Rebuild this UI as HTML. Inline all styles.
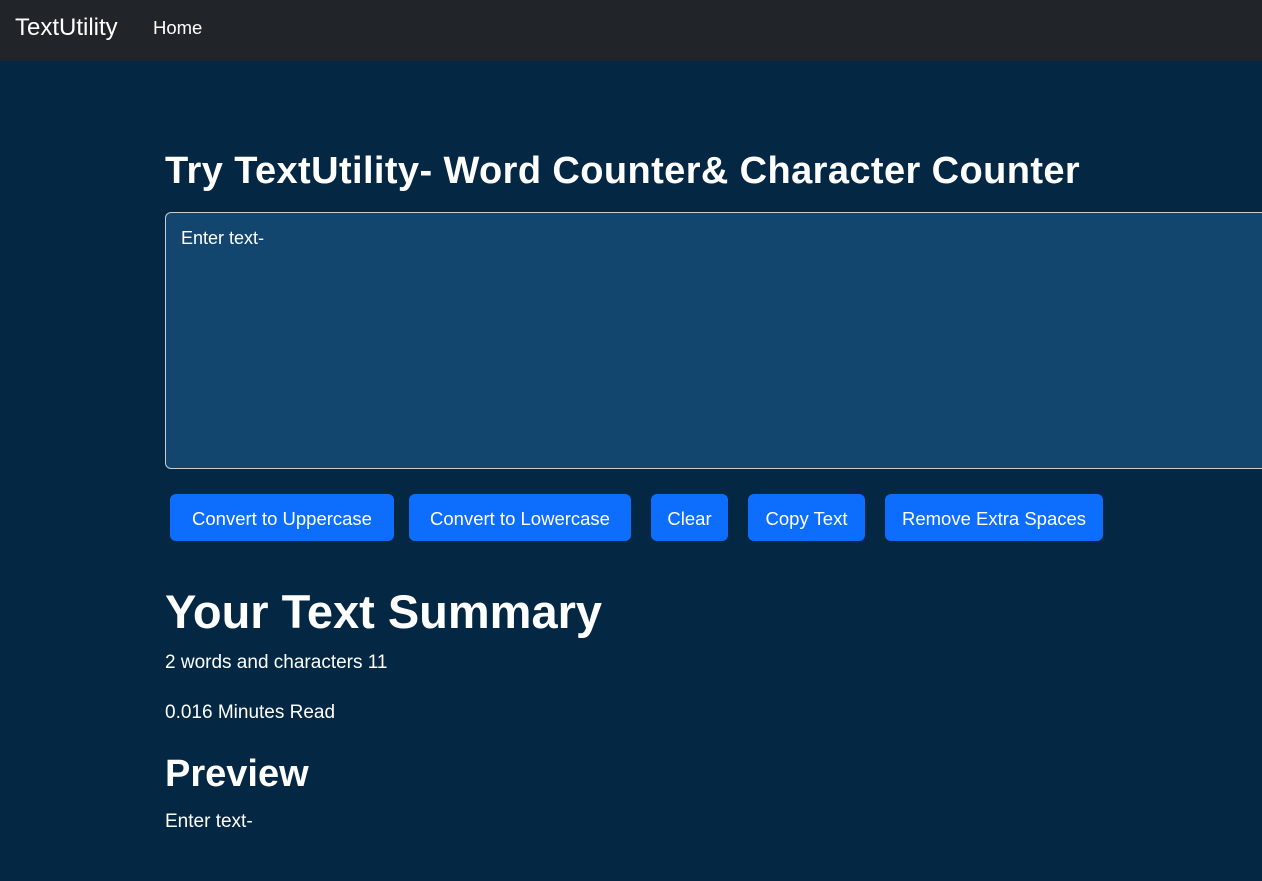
<!DOCTYPE html>
<html><head><style>
body{margin:0;width:1262px;height:881px;overflow:hidden;background:#042743;font-family:"Liberation Sans",sans-serif;color:#fff;position:relative}
.nav{position:absolute;left:0;top:0;width:1262px;height:61px;background:#212529}
.abs{position:absolute;white-space:nowrap}
.ta{position:absolute;left:165px;top:212px;width:1110px;height:257px;background:#13466e;border:1px solid #ccc;border-radius:6px;box-sizing:border-box}
.btn{position:absolute;top:494px;height:47px;background:#0d6efd;border-radius:6px;font-size:18.5px;line-height:49px;text-align:center}
</style></head><body>
<div class="nav"></div>
<div class="abs" style="left:15px;top:14px;font-size:24px">TextUtility</div>
<div class="abs" style="left:153px;top:17px;font-size:18.5px">Home</div>
<div class="abs" style="left:165px;top:150px;font-size:38px;font-weight:bold;letter-spacing:0.4px">Try TextUtility- Word Counter&amp; Character Counter</div>
<div class="ta"></div>
<div class="abs" style="left:181px;top:228px;font-size:18px">Enter text-</div>
<div class="btn" style="left:170px;width:224px">Convert to Uppercase</div>
<div class="btn" style="left:409px;width:222px">Convert to Lowercase</div>
<div class="btn" style="left:651px;width:77px">Clear</div>
<div class="btn" style="left:748px;width:117px">Copy Text</div>
<div class="btn" style="left:885px;width:218px">Remove Extra Spaces</div>
<div class="abs" style="left:165px;top:584px;font-size:47px;font-weight:bold">Your Text Summary</div>
<div class="abs" style="left:165px;top:652px;font-size:19px">2 words and characters 11</div>
<div class="abs" style="left:165px;top:702px;font-size:19px">0.016 Minutes Read</div>
<div class="abs" style="left:165px;top:753px;font-size:38px;font-weight:bold">Preview</div>
<div class="abs" style="left:165px;top:811px;font-size:19px">Enter text-</div>
</body></html>
